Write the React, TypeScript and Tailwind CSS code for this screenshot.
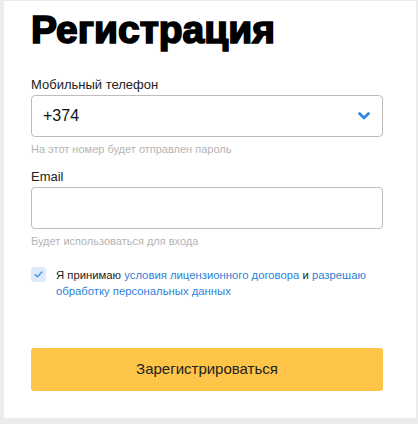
import React from "react";

export default function App() {
  return (
    <div className="h-[424px] w-[418px] bg-[#ececec] pl-[4px] pr-[2px] pt-[1px] pb-[6px] font-['Liberation_Sans',_Arial,_sans-serif]">
      <div className="h-full bg-white pl-[27px] pr-[33px] pt-[6px]">
        <h1 className="text-[39px] font-black leading-[46px] text-black [-webkit-text-stroke:1.7px_black]">
          Регистрация
        </h1>

        <div className="mt-[24px]">
          <label className="block text-[13px] leading-[16px] text-[#222]">
            Мобильный телефон
          </label>
          <div className="mt-[2px] flex h-[42px] items-center justify-between rounded-[4px] border border-[#bdbdbd] pl-[11px] pr-[11px]">
            <span className="text-[16px] text-[#111]">+374</span>
            <svg width="12" height="8" viewBox="0 0 12 8" className="mr-[1px]">
              <path
                d="M1.5 1.5 L6 6 L10.5 1.5"
                fill="none"
                stroke="#2d86e0"
                strokeWidth="2.6"
                strokeLinecap="round"
                strokeLinejoin="round"
              />
            </svg>
          </div>
          <p className="mt-[5px] text-[11px] leading-[14px] text-[#b4b4b4]">
            На этот номер будет отправлен пароль
          </p>
        </div>

        <div className="mt-[13px]">
          <label className="block text-[13px] leading-[16px] text-[#222]">
            Email
          </label>
          <div className="mt-[2px] h-[42px] rounded-[4px] border border-[#bdbdbd]"></div>
          <p className="mt-[5px] text-[11px] leading-[14px] text-[#b4b4b4]">
            Будет использоваться для входа
          </p>
        </div>

        <div className="mt-[19px] flex items-start gap-[10px]">
          <div className="flex h-[15px] w-[15px] shrink-0 items-center justify-center rounded-[3px] bg-[#dcebfb]">
            <svg width="9" height="7" viewBox="0 0 9 7">
              <path
                d="M1 3.6 L3.4 5.8 L8 1"
                fill="none"
                stroke="#4a90e2"
                strokeWidth="1.3"
                strokeLinecap="round"
                strokeLinejoin="round"
              />
            </svg>
          </div>
          <p className="text-[11.3px] leading-[16px] text-[#222]">
            Я принимаю <a className="text-[#2f7fd8]">условия лицензионного договора</a> и{" "}
            <a className="text-[#2f7fd8]">разрешаю обработку персональных данных</a>
          </p>
        </div>

        <button className="mt-[49px] flex h-[43px] w-full items-center justify-center rounded-[3px] bg-[#ffc548] text-[15px] text-[#222]">
          Зарегистрироваться
        </button>
      </div>
    </div>
  );
}
